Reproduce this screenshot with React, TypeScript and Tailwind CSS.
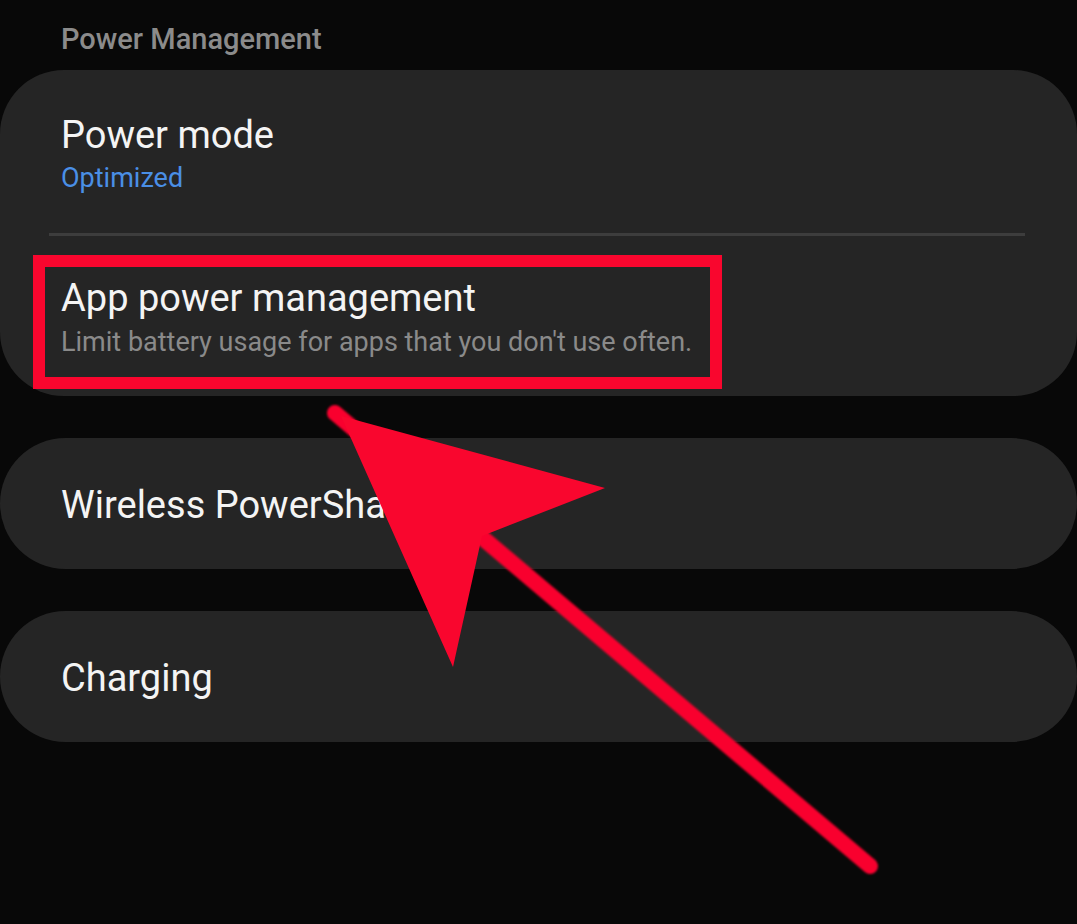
export default function App() {
	return (
		<main
			className="relative h-[924px] w-full overflow-hidden bg-[#080808]"
			style={{ fontFamily: "Roboto, 'Noto Sans', sans-serif" }}
		>
			<div className="pl-[61px] pt-[22px] text-[29px] font-medium leading-[34px] text-[#8b8b8b]">
				Power Management
			</div>

			<div className="mt-[14px] rounded-[64px] bg-[#252525] pb-[38px] pt-[43px]">
				<div className="pl-[61px]">
					<div className="text-[38px] leading-[44px] text-[#f4f4f4]">Power mode</div>
					<div className="mt-[5px] text-[27px] leading-[32px] text-[#4a8fe6]">Optimized</div>
				</div>
				<div className="ml-[49px] mr-[52px] mt-[39px] h-[3px] bg-[#3d3d3d]" />
				<div className="mt-[40px] pl-[61px]">
					<div className="text-[38px] leading-[44px] text-[#f4f4f4]">App power management</div>
					<div className="mt-[6px] text-[27px] leading-[32px] text-[#8a8a8a]">
						Limit battery usage for apps that you don't use often.
					</div>
				</div>
			</div>

			<div className="mt-[42px] flex flex-col gap-[42px]">
				{["Wireless PowerShare", "Charging"].map((label) => (
					<div
						key={label}
						className="h-[131px] rounded-[66px] bg-[#252525] pl-[61px] pt-[45px] text-[38px] leading-[44px] text-[#f4f4f4]"
					>
						{label}
					</div>
				))}
			</div>

			{/* annotation overlay */}
			<div className="pointer-events-none absolute left-[33px] top-[255px] h-[134px] w-[689px] border-[12px] border-[#f9062e]" />
			<svg className="pointer-events-none absolute left-0 top-0" width="1077" height="924" viewBox="0 0 1077 924">
				<defs>
					<filter id="soft" x="-10%" y="-10%" width="120%" height="120%">
						<feGaussianBlur stdDeviation="1.3" />
					</filter>
				</defs>
				<line
					x1="870"
					y1="866"
					x2="335"
					y2="413"
					stroke="#f9062e"
					strokeWidth="16"
					strokeLinecap="round"
					filter="url(#soft)"
				/>
				<polygon points="341,416 605,488 482,536 453,667" fill="#f9062e" />
			</svg>
		</main>
	);
}
